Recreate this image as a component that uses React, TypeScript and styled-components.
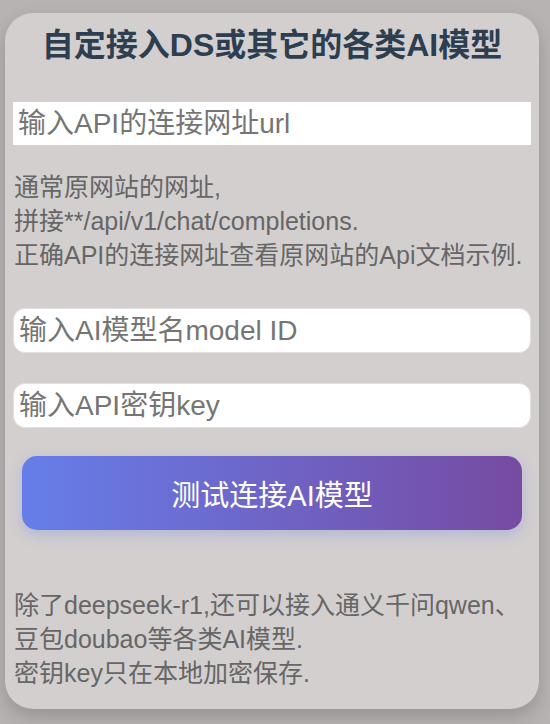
import React from "react";
import styled, { createGlobalStyle } from "styled-components";

const GlobalStyle = createGlobalStyle`
  html, body {
    margin: 0;
    padding: 0;
    background: #b8b3b3;
  }
  body {
    font-family: "Liberation Sans", "Noto Sans CJK SC", sans-serif;
  }
`;

const Page = styled.div`
  width: 550px;
  height: 724px;
  padding: 13px 0 0 5px;
  box-sizing: border-box;
  background: #b8b3b3;
`;

const Card = styled.div`
  width: 534px;
  box-sizing: border-box;
  padding: 14px 8px 19px 8px;
  background: #d3cfcf;
  border-radius: 28px;
  box-shadow: 0 8px 18px rgba(0, 0, 0, 0.18);
  display: flex;
  flex-direction: column;
`;

const Title = styled.h1`
  margin: 0 0 39px 0;
  font-size: 32px;
  line-height: 36px;
  font-weight: 700;
  color: #2c3e50;
  text-align: center;
  white-space: nowrap;
`;

const Field = styled.input<{ $rounded?: boolean }>`
  display: block;
  width: 100%;
  box-sizing: border-box;
  height: ${(p) => (p.$rounded ? "45px" : "43px")};
  padding: 0 5px;
  border: ${(p) => (p.$rounded ? "1px solid #e2e0e0" : "none")};
  border-radius: ${(p) => (p.$rounded ? "12px" : "0")};
  background: #ffffff;
  font-family: "Liberation Sans", "Noto Sans CJK SC", sans-serif;
  font-size: 28px;
  color: #333;
  outline: none;
  &::placeholder {
    color: #757575;
  }
`;

const Note = styled.p<{ $mt: number; $mb: number }>`
  margin: ${(p) => p.$mt}px 0 ${(p) => p.$mb}px 1px;
  font-size: 25px;
  line-height: 34px;
  color: #666666;
  white-space: nowrap;
`;

const Gap = styled.div<{ $h: number }>`
  height: ${(p) => p.$h}px;
`;

const Button = styled.button`
  margin: 28px 9px 0 9px;
  height: 74px;
  border: none;
  border-radius: 15px;
  background: linear-gradient(90deg, #667eea 0%, #764ba2 100%);
  box-shadow: 0 5px 14px rgba(102, 126, 234, 0.3);
  color: #ffffff;
  font-family: "Liberation Sans", "Noto Sans CJK SC", sans-serif;
  font-size: 29px;
  cursor: pointer;
`;

export default function App() {
  return (
    <>
      <GlobalStyle />
      <Page>
        <Card>
          <Title>自定接入DS或其它的各类AI模型</Title>
          <Field placeholder="输入API的连接网址url" />
          <Note $mt={25} $mb={36}>
            通常原网站的网址,
            <br />
            拼接**/api/v1/chat/completions.
            <br />
            正确API的连接网址查看原网站的Api文档示例.
          </Note>
          <Field $rounded placeholder="输入AI模型名model ID" />
          <Gap $h={30} />
          <Field $rounded placeholder="输入API密钥key" />
          <Button>测试连接AI模型</Button>
          <Note $mt={58} $mb={0}>
            除了deepseek-r1,还可以接入通义千问qwen、
            <br />
            豆包doubao等各类AI模型.
            <br />
            密钥key只在本地加密保存.
          </Note>
        </Card>
      </Page>
    </>
  );
}
